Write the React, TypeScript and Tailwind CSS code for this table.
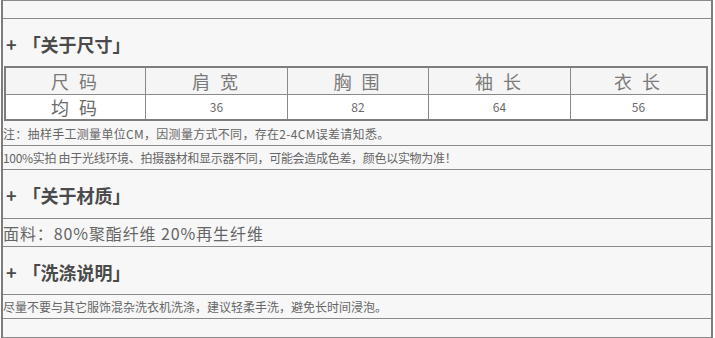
import React from "react";

const font = { fontFamily: '"Noto Sans CJK SC", "Noto Sans", sans-serif' };

function Title({ text, h }: { text: string; h: string }) {
  return (
    <div className={`${h} flex items-center pl-[3px] pt-[3px] text-[18px] font-bold text-[#4a4a4a] bg-[#f7f7f7]`}>
      <span>+</span>
      <span className="ml-[6px] whitespace-pre">{"「" + text + "」"}</span>
    </div>
  );
}

const headers = ["尺 码", "肩 宽", "胸 围", "袖 长", "衣 长"];
const values = ["均 码", "36", "82", "64", "56"];
const widths = ["w-[139px]", "w-[142px]", "w-[141px]", "w-[142px]", "flex-1"];

export default function App() {
  return (
    <div className="w-[715px] h-[338px] bg-white overflow-hidden" style={font}>
      <div className="ml-[1px] w-[712px] h-[338px] border-x-2 border-[#7d7d7d] bg-[#f7f7f7] flex flex-col">
        <div className="h-[19px] border-y border-[#8a8a8a]" />
        <Title text="关于尺寸" h="h-[47px]" />
        <div className="ml-[1px] mr-[3px] border-2 border-[#7d7d7d] flex flex-col">
          <div className="h-[27px] flex bg-[#f5f5f5] border-b border-[#8a8a8a]">
            {headers.map((t, i) => (
              <div
                key={i}
                className={`${widths[i]} ${i > 0 ? "border-l border-[#8a8a8a]" : ""} flex items-center justify-center text-[18px] text-[#7a7a7a] tracking-[3px] whitespace-pre`}
              >
                {t}
              </div>
            ))}
          </div>
          <div className="h-[24px] flex bg-white">
            {values.map((t, i) => (
              <div
                key={i}
                className={`${widths[i]} ${i > 0 ? "border-l border-[#8a8a8a] text-[12px]" : "text-[18px] tracking-[3px]"} flex items-center justify-center text-[#6a6a6a] whitespace-pre`}
              >
                {t}
              </div>
            ))}
          </div>
        </div>
        <div className="h-[25px] pt-[2px] border-b border-[#8a8a8a] flex items-center text-[12px] text-[#666] tracking-[0.3px] whitespace-nowrap">
          注：抽样手工测量单位CM，因测量方式不同，存在2-4CM误差请知悉。
        </div>
        <div className="h-[24px] border-b border-[#8a8a8a] flex items-center text-[12px] text-[#666] tracking-[-0.3px] whitespace-nowrap">
          100%实拍 由于光线环境、拍摄器材和显示器不同，可能会造成色差，颜色以实物为准！
        </div>
        <div className="border-b border-[#8a8a8a]">
          <Title text="关于材质" h="h-[48px]" />
        </div>
        <div className="h-[28px] border-b border-[#8a8a8a] flex items-center text-[16px] text-[#666] tracking-[0.9px] whitespace-nowrap">
          面料：80%聚酯纤维 20%再生纤维
        </div>
        <div className="border-b border-[#8a8a8a]">
          <Title text="洗涤说明" h="h-[47px]" />
        </div>
        <div className="h-[24px] pt-[1px] border-b border-[#8a8a8a] flex items-center text-[12px] text-[#666] whitespace-nowrap">
          尽量不要与其它服饰混杂洗衣机洗涤，建议轻柔手洗，避免长时间浸泡。
        </div>
        <div className="h-[19px] border-b border-[#8a8a8a]" />
      </div>
    </div>
  );
}
